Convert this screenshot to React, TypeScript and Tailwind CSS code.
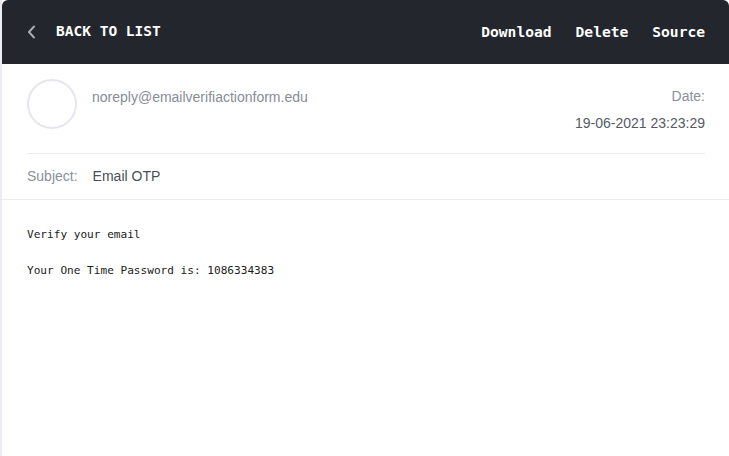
import React from "react";

export default function App() {
  const mono = { fontFamily: '"DejaVu Sans Mono", monospace' };
  const sans = { fontFamily: '"Liberation Sans", Arial, sans-serif' };
  return (
    <div className="w-[729px] h-[456px] bg-white overflow-hidden">
      <div className="h-full flex flex-col border-l-2 border-[#ebebf1]">
        <header
          className="h-[64px] shrink-0 bg-[#23262d] rounded-tl-md rounded-tr-md flex items-center justify-between pl-[25px] pr-[24px] text-white"
          style={mono}
        >
          <div className="flex items-center">
            <svg width="10" height="14" viewBox="0 0 10 14" className="mr-[19px]">
              <path d="M7 1.5 L2 7 L7 12.5" fill="none" stroke="#a7abb4" strokeWidth="2" strokeLinecap="round" strokeLinejoin="round" />
            </svg>
            <span className="text-[14.5px] font-bold">BACK TO LIST</span>
          </div>
          <nav className="flex items-center gap-[24px] text-[14.6px] font-bold">
            <span>Download</span>
            <span>Delete</span>
            <span>Source</span>
          </nav>
        </header>
        <div className="px-[25px] pr-[24px]" style={sans}>
          <div className="flex items-start pt-[15px] pb-[22px] border-b border-[#ebebef]">
            <div className="w-[50px] h-[50px] rounded-full border-2 border-[#e6e6ee] shrink-0" />
            <div className="ml-[15px] mt-[8px] text-[14px] text-[#878c97]">
              noreply@emailverifiactionform.edu
            </div>
            <div className="ml-auto mt-[9px] text-right text-[14px]">
              <div className="text-[#8a8f9c] leading-[16px]">Date:</div>
              <div className="text-[#555a64] leading-[16px] mt-[11px]">19-06-2021 23:23:29</div>
            </div>
          </div>
        </div>
        <div className="h-[46px] flex items-center border-b border-[#ebebef] px-[25px] text-[14px]" style={sans}>
          <span className="text-[#8a8f9c]">Subject:</span>
          <span className="ml-[15px] text-[#4a4f59]">Email OTP</span>
        </div>
        <pre className="px-[25px] pt-[26px] text-[11.1px] leading-[18px] text-[#1b1b1b]" style={mono}>
{`Verify your email

Your One Time Password is: 1086334383`}
        </pre>
      </div>
    </div>
  );
}
